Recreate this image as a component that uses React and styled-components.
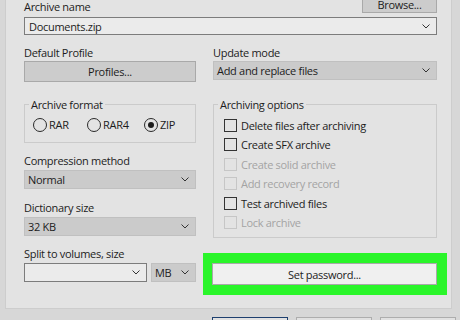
import React from 'react';
import styled, { createGlobalStyle } from 'styled-components';

const GlobalStyle = createGlobalStyle`
  html, body {
    margin: 0;
    padding: 0;
    background: #d7d7d7;
  }
  body {
    font-family: "Open Sans", "Noto Sans", sans-serif;
    font-size: 11px;
    letter-spacing: -0.3px;
    color: #1c1c1c;
  }
`;

const Screen = styled.div`
  width: 460px;
  height: 320px;
  overflow: hidden;
  background: #d7d7d7;
`;

const Panel = styled.div`
  box-sizing: border-box;
  width: 447px;
  height: 319px;
  margin: -10px 0 0 5px;
  padding: 0 14px 0 18px;
  background: #e3e3e3;
  border: 1px solid #cdcdcd;
  border-top: none;
`;

const TopRow = styled.div`
  display: flex;
  justify-content: space-between;
  align-items: flex-end;
  height: 23px;
`;

const Label = styled.div`
  line-height: 13px;
  height: 13px;
  white-space: nowrap;
  margin-top: ${(p) => p.$mt || 0}px;
`;

const Button = styled.div`
  box-sizing: border-box;
  display: flex;
  align-items: center;
  justify-content: center;
  width: ${(p) => (p.$w ? `${p.$w}px` : 'auto')};
  height: ${(p) => p.$h || 21}px;
  margin-top: ${(p) => p.$mt || 0}px;
  padding-top: ${(p) => p.$pt || 0}px;
  background: ${(p) => (p.$light ? '#f0f0f0' : '#cccccc')};
  border: 1px solid #a9a9a9;
  white-space: nowrap;
`;

const Combo = styled.div`
  box-sizing: border-box;
  display: flex;
  align-items: center;
  justify-content: space-between;
  width: ${(p) => (p.$w ? `${p.$w}px` : 'auto')};
  height: ${(p) => p.$h || 19}px;
  margin-top: ${(p) => p.$mt || 0}px;
  padding: 0 6px 0 ${(p) => p.$pl || 3}px;
  background: ${(p) => (p.$field ? '#ebebeb' : '#cbcbcb')};
  border: 1px solid ${(p) => (p.$field ? '#7c7c7c' : '#c0c0c0')};
  white-space: nowrap;
`;

const Columns = styled.div`
  display: grid;
  grid-template-columns: 172px 224px;
  column-gap: 17px;
  align-items: start;
  margin-top: 11px;
`;

const Column = styled.div`
  display: flex;
  flex-direction: column;
`;

const Group = styled.fieldset`
  margin: ${(p) => p.$mt}px 0 0 0;
  padding: ${(p) => p.$pt}px 4px ${(p) => p.$pb}px ${(p) => p.$inset}px;
  border: 1px solid #cbcbcb;
  min-width: 0;
`;

const Legend = styled.legend`
  line-height: 13px;
  padding: 0 2px;
  margin-left: ${(p) => p.$ml}px;
`;

const RadioRow = styled.div`
  display: flex;
  height: 14px;
`;

const RadioItem = styled.div`
  display: flex;
  align-items: center;
  gap: 2px;
  width: ${(p) => (p.$w ? `${p.$w}px` : 'auto')};
  line-height: 14px;
`;

const Radio = styled.span`
  box-sizing: border-box;
  display: flex;
  align-items: center;
  justify-content: center;
  width: 14px;
  height: 14px;
  border: 1px solid #2a2a2a;
  border-radius: 50%;

  &::after {
    content: '';
    display: ${(p) => (p.$on ? 'block' : 'none')};
    width: 6px;
    height: 6px;
    border-radius: 50%;
    background: #1c1c1c;
  }
`;

const CheckRow = styled.div`
  display: flex;
  align-items: center;
  gap: 4px;
  height: 19.5px;
  color: ${(p) => (p.$off ? '#a3a3a3' : '#1c1c1c')};
`;

const Box = styled.span`
  box-sizing: border-box;
  width: 13px;
  height: 13px;
  border: 1px solid ${(p) => (p.$off ? '#c6c6c6' : '#333333')};
`;

const SplitRow = styled.div`
  display: flex;
  gap: 4px;
  margin-top: 3px;
`;

const Highlight = styled.div`
  margin: 15px -10px 0 -10px;
  padding: 10px 10px 10px 9px;
  background: #2af52a;
`;

const Footer = styled.div`
  display: flex;
  gap: 8px;
  padding: 8px 0 0 212px;
`;

const FooterButton = styled.div`
  box-sizing: border-box;
  width: 76px;
  height: 23px;
  background: #e1e1e1;
  border: 1px solid ${(p) => (p.$primary ? '#1e3f6e' : '#adadad')};
`;

const Chevron = () => (
  <svg width="8" height="5" viewBox="0 0 8 5">
    <polyline points="0.5,0.5 4,4 7.5,0.5" fill="none" stroke="#333" strokeWidth="1" />
  </svg>
);

const options = [
  ['Delete files after archiving', false],
  ['Create SFX archive', false],
  ['Create solid archive', true],
  ['Add recovery record', true],
  ['Test archived files', false],
  ['Lock archive', true],
];

export default function App() {
  return (
    <Screen>
      <GlobalStyle />
      <Panel>
        <TopRow>
          <Label>Archive name</Label>
          <Button $w={75} $h={23} $pt={6}>Browse...</Button>
        </TopRow>
        <Combo $field $h={18} $mt={4} $pl={4}>
          <span>Documents.zip</span>
          <Chevron />
        </Combo>

        <Columns>
          <Column>
            <Label>Default Profile</Label>
            <Button $mt={2}>Profiles...</Button>

            <Group $mt={15.5} $pt={7.5} $pb={10} $inset={8}>
              <Legend $ml={-4}>Archive format</Legend>
              <RadioRow>
                <RadioItem $w={54}><Radio />RAR</RadioItem>
                <RadioItem $w={57}><Radio />RAR4</RadioItem>
                <RadioItem><Radio $on />ZIP</RadioItem>
              </RadioRow>
            </Group>

            <Label $mt={11}>Compression method</Label>
            <Combo $mt={3}>
              <span>Normal</span>
              <Chevron />
            </Combo>

            <Label $mt={12}>Dictionary size</Label>
            <Combo $mt={3}>
              <span>32 KB</span>
              <Chevron />
            </Combo>

            <Label $mt={11}>Split to volumes, size</Label>
            <SplitRow>
              <Combo $field $w={123}>
                <span />
                <Chevron />
              </Combo>
              <Combo $w={45}>
                <span>MB</span>
                <Chevron />
              </Combo>
            </SplitRow>
          </Column>

          <Column>
            <Label>Update mode</Label>
            <Combo $mt={2}>
              <span>Add and replace files</span>
              <Chevron />
            </Combo>

            <Group $mt={17.5} $pt={4.75} $pb={5} $inset={10}>
              <Legend $ml={-6}>Archiving options</Legend>
              {options.map(([text, off]) => (
                <CheckRow key={text} $off={off}>
                  <Box $off={off} />
                  {text}
                </CheckRow>
              ))}
            </Group>

            <Highlight>
              <Button $light $h={22}>Set password...</Button>
            </Highlight>
          </Column>
        </Columns>
      </Panel>
      <Footer>
        <FooterButton $primary />
        <FooterButton />
        <FooterButton />
      </Footer>
    </Screen>
  );
}
